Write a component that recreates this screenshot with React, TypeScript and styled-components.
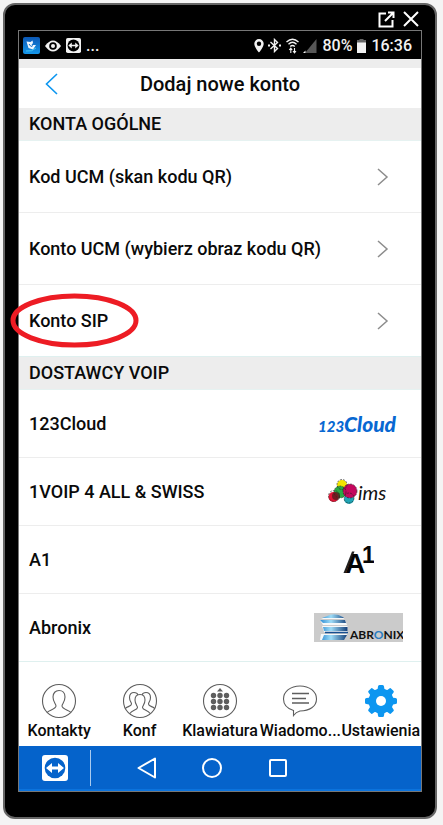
import React from "react";
import styled, { createGlobalStyle } from "styled-components";

const GlobalStyle = createGlobalStyle`
  * { box-sizing: border-box; }
  body { margin: 0; background: #f4f4f4; font-family: Roboto, sans-serif; color: #0a0a0a; }
  button { font: inherit; color: inherit; background: none; border: 0; padding: 0; margin: 0; cursor: pointer; }
  svg { display: block; flex: none; }
`;

const Device = styled.div`
  margin: 3px 6px 6px 3px;
  padding: 0 13px 25px;
  background: #000;
  border: 2px solid #666;
  border-radius: 12px;
`;

const WindowBar = styled.div`
  height: 25px;
  display: flex;
  justify-content: flex-end;
  align-items: center;
  gap: 8px;
  padding: 3px 3px 0 0;
`;

const Screen = styled.div`
  border: 1px solid #777;
  background: #fff;
`;

const StatusBar = styled.div`
  height: 28px;
  background: #000;
  color: #f2f2f2;
  display: flex;
  align-items: center;
  justify-content: space-between;
  padding: 1px 9px 0 4px;
  font-size: 16px;
  font-weight: 500;
`;

const StatusGroup = styled.div`
  display: flex;
  align-items: center;
  gap: 5px;
`;

const Radios = styled.div`
  display: flex;
  align-items: center;
  gap: 4px;
`;

const Header = styled.header`
  height: 49px;
  border-top: 9px solid #ededed;
  display: grid;
  grid-template-columns: 64px 1fr 64px;
  align-items: center;
`;

const BackButton = styled.button`
  padding-left: 26px;
  height: 40px;
  padding-bottom: 8px;
`;

const Title = styled.h1`
  margin: 0;
  padding-bottom: 8px;
  font-size: 20px;
  line-height: 24px;
  font-weight: 500;
  text-align: center;
`;

const SectionTitle = styled.h2`
  margin: 0;
  padding: 0 10px;
  background: #ededed;
  border-bottom: 1px solid #e6f2f1;
  font-size: 18px;
  line-height: 32px;
  font-weight: 500;
`;

const List = styled.ul`
  list-style: none;
  margin: 0;
  padding: 0;
  border-bottom: 1px solid #dff0ef;
`;

const ListItem = styled.li`
  position: relative;
  & + & { border-top: 1px solid #ededed; }
`;

const Row = styled.button<{ $height: number; $end: number }>`
  width: 100%;
  height: ${(p) => p.$height}px;
  display: flex;
  align-items: center;
  justify-content: space-between;
  padding: 0 ${(p) => p.$end}px 0 10px;
  font-size: 18px;
  line-height: 24px;
  font-weight: 500;
  text-align: left;
`;

const Highlight = styled.svg`
  position: absolute;
  left: -9px;
  top: 8px;
  pointer-events: none;
`;

const LogoBox = styled.span`
  width: 92px;
  display: flex;
  justify-content: center;
`;

const LogoText = styled.text<{ $size: number; $weight: number; $face?: string }>`
  font-family: ${(p) => p.$face || "Lato"}, Lato, sans-serif;
  font-size: ${(p) => p.$size}px;
  font-weight: ${(p) => p.$weight};
`;

const Tabs = styled.nav`
  height: 84px;
  display: grid;
  grid-template-columns: repeat(5, minmax(0, 1fr));
`;

const Tab = styled.button`
  display: flex;
  flex-direction: column;
  align-items: center;
  padding-top: 21px;
  gap: 2px;
  font-size: 16px;
  line-height: 20px;
  font-weight: 500;
  white-space: nowrap;
`;

const SystemBar = styled.div`
  height: 45px;
  background: #0563cb;
  border-bottom: 2px solid #0b73dd;
  display: flex;
  align-items: center;
`;

const RemoteButton = styled.button`
  width: 72px;
  height: 36px;
  display: flex;
  align-items: center;
  justify-content: center;
  border-right: 1px solid #a9cbef;
`;

const SystemKeys = styled.div`
  width: 49%;
  margin-left: 23px;
  display: grid;
  grid-template-columns: repeat(3, 1fr);
  justify-items: center;
`;

const Chevron = () => (
  <svg width="12" height="18" viewBox="0 0 12 18" fill="none" stroke="#8c8c8c" strokeWidth="1.5">
    <path d="M1 1l9 8-9 8" />
  </svg>
);

const RemoteIcon = ({ size, bg, disc }: { size: number; bg: string; disc: string }) => (
  <svg width={size} height={size} viewBox="0 0 26 26">
    <rect width="26" height="26" rx="3" fill={bg} />
    <circle cx="13" cy="13" r="10.3" fill={disc} />
    <path d="M4 13l6-5v3.500h6V8l6 5-6 5v-3.500h-6V18z" fill={bg} />
  </svg>
);

const AppIcon = () => (
  <svg width="17" height="17" viewBox="0 0 17 17">
    <defs>
      <linearGradient id="app" x1="0" y1="0" x2="0" y2="1">
        <stop offset="0" stopColor="#0c58b5" />
        <stop offset="1" stopColor="#1597ea" />
      </linearGradient>
    </defs>
    <rect width="17" height="17" rx="2" fill="url(#app)" />
    <path d="M3.500 4.500l4 .5 2-1.500.5 2.500-1.500 2 4.500 0-3 4.500-4.500-1.500z" fill="#eef7ff" />
    <path d="M6 7l2 2.500 2-1" stroke="#1671c6" fill="none" />
    <path d="M3 14q6 1 10-3" stroke="#42c6f5" fill="none" />
  </svg>
);

const EyeIcon = () => (
  <svg width="16" height="12" viewBox="0 0 16 12">
    <path d="M0 6Q8-5 16 6Q8 17 0 6z" fill="#f2f2f2" />
    <circle cx="8" cy="6" r="3.800" fill="#000" />
    <circle cx="8" cy="6" r="2" fill="#f2f2f2" />
  </svg>
);

const PinIcon = () => (
  <svg width="10" height="14" viewBox="0 0 10 14">
    <path d="M5 0a4.700 4.700 0 0 1 4.700 4.700C9.700 8 5 13.500 5 13.500S.3 8 .3 4.700A4.700 4.700 0 0 1 5 0z" fill="#f2f2f2" />
    <circle cx="5" cy="4.700" r="2.200" fill="#000" />
  </svg>
);

const BluetoothIcon = () => (
  <svg width="13" height="15" viewBox="0 0 13 15" fill="none" stroke="#f2f2f2" strokeWidth="1.400">
    <path d="M2.500 4l7 6.500L6.500 13.500V1.500L9.500 4.500l-7 6.500" />
    <path d="M0 7.500h2M11 7.500h2" strokeWidth="1.800" />
  </svg>
);

const WifiIcon = () => (
  <svg width="13" height="16" viewBox="0 0 13 16" fill="none" stroke="#f2f2f2" strokeWidth="1.400">
    <path d="M.5 4Q6.500-1.500 12.500 4M2.500 6.200Q6.500 2.500 10.500 6.200M4.200 8.500Q6.500 6.500 8.800 8.500" />
    <path d="M4.800 15v-4.500M3.200 12l1.600-1.800L6.200 12M8.500 10v4.500M7 13l1.500 1.800L10 13" strokeWidth="1.100" />
  </svg>
);

const SignalIcon = () => (
  <svg width="14" height="14" viewBox="0 0 14 14">
    <path d="M13.500 0v14H2z" fill="#575757" />
    <path d="M0 14l2.500-2.500V14z" fill="#f2f2f2" />
  </svg>
);

const BatteryIcon = () => (
  <svg width="9" height="14" viewBox="0 0 9 14">
    <path d="M2.500 0h4v1H9v3H0V1h2.500z" fill="#666" />
    <path d="M0 3.500h9V14H0z" fill="#f2f2f2" />
  </svg>
);

const CloudLogo = () => (
  <svg width="84" height="30" viewBox="0 0 84 30" role="img" aria-label="123Cloud" fill="#0868d2">
    <LogoText x="2" y="23" $size={15} $weight={900} fontStyle="italic">123</LogoText>
    <LogoText x="28" y="23" $size={21} $weight={900} fontStyle="italic">Cloud</LogoText>
  </svg>
);

const ImsLogo = () => (
  <svg width="62" height="28" viewBox="0 0 62 28" role="img" aria-label="ims">
    <circle cx="15" cy="7" r="5" fill="#f3e500" />
    <circle cx="13" cy="14" r="6" fill="#27a844" />
    <circle cx="6.500" cy="19" r="5" fill="#e21235" />
    <circle cx="22" cy="21" r="5" fill="#1fa5b5" />
    <circle cx="23" cy="13" r="7" fill="#c4075d" />
    <g fill="none" stroke="#222" strokeWidth=".6" strokeDasharray="2 1">
      <circle cx="15" cy="6.500" r="5" />
      <circle cx="13" cy="14" r="6" />
      <circle cx="7" cy="18" r="5.500" />
      <circle cx="22" cy="20" r="5" />
      <circle cx="23" cy="13" r="7" />
    </g>
    <circle cx="9" cy="18" r="4" fill="#451d18" opacity=".7" />
    <LogoText x="31" y="22" $size={20} $weight={400} fontStyle="italic" fill="#111">ims</LogoText>
  </svg>
);

const A1Logo = () => (
  <svg width="32" height="30" viewBox="0 0 32 30" role="img" aria-label="A1">
    <path d="M1.500 28L10 6.500h2.500L4 28z" fill="#222" />
    <LogoText x="3" y="28" $size={28} $weight={700} $face="'Liberation Sans'" fill="#050505">A</LogoText>
    <LogoText x="20" y="18" $size={23} $weight={700} $face="'Liberation Sans'" fill="#050505">1</LogoText>
  </svg>
);

const AbronixLogo = () => (
  <svg width="89" height="29" viewBox="0 0 89 29" role="img" aria-label="ABRONIX">
    <defs>
      <linearGradient id="globe" x1="0" y1="0" x2="1" y2="0">
        <stop offset="0" stopColor="#2e8bd2" />
        <stop offset=".4" stopColor="#9edcf7" />
        <stop offset="1" stopColor="#123d78" />
      </linearGradient>
    </defs>
    <rect width="89" height="29" fill="#cbcbcb" />
    <path d="M12 4Q21-1 29 4l1 2H7zM6 7h25l2 5H9zM8 13h25.500v6H10zM7 21h26q-1 4-4 6H6z" fill="#f5f8fa" />
    <path d="M12 3.500Q21-1 29 4l1 1H8zM6 7h25l1 3H9zM9 14h24.500v4H10zM10 22h23l-3 5H8z" fill="url(#globe)" />
    <path d="M11 19.500h23" stroke="#174e90" strokeWidth="1.500" />
    <LogoText x="36" y="26" $size={12} $weight={700} $face="Lato" fill="#111">
      ABR<tspan fill="#287cc0">O</tspan>NIX
    </LogoText>
  </svg>
);

const line = { fill: "none", stroke: "#5e5e5e", strokeWidth: 1.1 };

const ContactIcon = () => (
  <svg width="36" height="36" viewBox="0 0 36 36" {...line}>
    <circle cx="18" cy="18" r="16.500" />
    <path d="M6 29.500c2-2.500 9-3.500 9-6.500 0-2-3-4-3-9 0-4 2.500-6.500 6-6.500s6 2.500 6 6.500c0 5-3 7-3 9 0 3 7 4 9 6.500" />
  </svg>
);

const ConfIcon = () => (
  <svg width="36" height="36" viewBox="0 0 36 36" {...line}>
    <circle cx="18" cy="18" r="16.500" />
    <path d="M8 30.500c1.500-3 7.500-3.500 7.500-6 0-1.500-2.500-3.500-2.500-7.500 0-3.500 2-5.500 5-5.500s5 2 5 5.500c0 4-2.500 6-2.500 7.500 0 2.500 6 3 7.500 6" />
    <path d="M3.500 25.500c1-2 6-2 6-4.500 0-1.500-2-3-2-6.500 0-3.500 2-5 4.500-5 2 0 3.500 1 4 2.500M32.500 25.500c-1-2-6-2-6-4.500 0-1.500 2-3 2-6.500 0-3.500-2-5-4.500-5-2 0-3.500 1-4 2.500" />
  </svg>
);

const KeypadIcon = () => (
  <svg width="36" height="36" viewBox="0 0 36 36">
    <circle cx="18" cy="18" r="16.500" {...line} />
    <g fill="#5e5e5e">
      {[12.5, 18.5, 24.5].map((y) => [11.5, 18, 24.5].map((x) => <circle key={`${x}-${y}`} cx={x} cy={y} r="2.700" />))}
      <path d="M15 8.500l3-3.500 3 3.500z" />
    </g>
  </svg>
);

const MessageIcon = () => (
  <svg width="36" height="36" viewBox="0 0 36 36" {...line}>
    <path d="M11.500 27.500C5 25.500 1.500 21 1.500 16 1.500 8.500 8.500 3 18 3s16.500 5.500 16.500 13S27.500 28 18 28q-4 1-6.500 4.500z" />
    <path d="M10 10.500h17M10 15.500h14M10 20h17" strokeWidth="1.600" />
  </svg>
);

const GearIcon = () => (
  <svg width="36" height="36" viewBox="0 0 36 36">
    <g fill="#0c96f0">
      <circle cx="18" cy="18" r="12.500" />
      {[0, 45, 90, 135, 180, 225, 270, 315].map((a) => (
        <path key={a} d="M13.500 7.500Q15 6 15 3.500Q15 2 16.500 2h3Q21 2 21 3.500Q21 6 22.500 7.500z" transform={`rotate(${a} 18 18)`} />
      ))}
    </g>
    <circle cx="18" cy="18" r="5" fill="#fff" />
  </svg>
);

const accounts = ["Kod UCM (skan kodu QR)", "Konto UCM (wybierz obraz kodu QR)", "Konto SIP"];

const providers = [
  { name: "123Cloud", logo: <CloudLogo /> },
  { name: "1VOIP 4 ALL & SWISS", logo: <ImsLogo /> },
  { name: "A1", logo: <A1Logo /> },
  { name: "Abronix", logo: <AbronixLogo /> },
];

const tabs = [
  { name: "Kontakty", icon: <ContactIcon /> },
  { name: "Konf", icon: <ConfIcon /> },
  { name: "Klawiatura", icon: <KeypadIcon /> },
  { name: "Wiadomo...", icon: <MessageIcon /> },
  { name: "Ustawienia", icon: <GearIcon /> },
];

export default function App() {
  return (
    <>
      <GlobalStyle />
      <Device>
        <WindowBar>
          <button aria-label="Otwórz w nowym oknie">
            <svg width="17" height="17" viewBox="0 0 17 17" fill="none" stroke="#fff" strokeWidth="2">
              <path d="M8 2.500H1.500v13h13V9M7 10l8-8M10 1.500h5.500V7" />
            </svg>
          </button>
          <button aria-label="Zamknij">
            <svg width="16" height="16" viewBox="0 0 16 16" fill="none" stroke="#fff" strokeWidth="2">
              <path d="M1 1l14 14M15 1L1 15" />
            </svg>
          </button>
        </WindowBar>
        <Screen>
          <StatusBar>
            <StatusGroup>
              <AppIcon />
              <EyeIcon />
              <RemoteIcon size={15} bg="#f2f2f2" disc="#000" />
              <span>...</span>
            </StatusGroup>
            <StatusGroup>
              <Radios>
                <PinIcon />
                <BluetoothIcon />
              </Radios>
              <Radios>
                <WifiIcon />
                <SignalIcon />
              </Radios>
              <span>80%</span>
              <BatteryIcon />
              <span>16:36</span>
            </StatusGroup>
          </StatusBar>
          <Header>
            <BackButton aria-label="Wstecz">
              <svg width="13" height="22" viewBox="0 0 13 22" fill="none" stroke="#0c96f0" strokeWidth="1.600">
                <path d="M12 1L1.500 11 12 21" />
              </svg>
            </BackButton>
            <Title>Dodaj nowe konto</Title>
          </Header>
          <main>
            <SectionTitle>KONTA OGÓLNE</SectionTitle>
            <List>
              {accounts.map((name) => (
                <ListItem key={name}>
                  <Row $height={71} $end={32}>
                    {name}
                    <Chevron />
                  </Row>
                  {name === "Konto SIP" && (
                    <Highlight width="129" height="55" viewBox="0 0 129 55" fill="none" stroke="#ed1c24" strokeWidth="5">
                      <ellipse cx="64.500" cy="27.500" rx="61.500" ry="24.500" />
                    </Highlight>
                  )}
                </ListItem>
              ))}
            </List>
            <SectionTitle>DOSTAWCY VOIP</SectionTitle>
            <List>
              {providers.map(({ name, logo }) => (
                <ListItem key={name}>
                  <Row $height={67} $end={17}>
                    {name}
                    <LogoBox>{logo}</LogoBox>
                  </Row>
                </ListItem>
              ))}
            </List>
          </main>
          <Tabs>
            {tabs.map(({ name, icon }) => (
              <Tab key={name}>
                {icon}
                {name}
              </Tab>
            ))}
          </Tabs>
          <SystemBar>
            <RemoteButton aria-label="TeamViewer">
              <RemoteIcon size={26} bg="#fff" disc="#0563cb" />
            </RemoteButton>
            <SystemKeys>
              <button aria-label="Wróć">
                <svg width="22" height="22" viewBox="0 0 22 22" fill="none" stroke="#fff" strokeWidth="2">
                  <path d="M19 1.500v19L2.500 11z" strokeLinejoin="round" />
                </svg>
              </button>
              <button aria-label="Ekran główny">
                <svg width="22" height="22" viewBox="0 0 22 22" fill="none" stroke="#fff" strokeWidth="2">
                  <circle cx="11" cy="11" r="9" />
                </svg>
              </button>
              <button aria-label="Ostatnie aplikacje">
                <svg width="22" height="22" viewBox="0 0 22 22" fill="none" stroke="#fff" strokeWidth="2">
                  <rect x="3" y="3" width="16" height="16" rx="1" />
                </svg>
              </button>
            </SystemKeys>
          </SystemBar>
        </Screen>
      </Device>
    </>
  );
}
